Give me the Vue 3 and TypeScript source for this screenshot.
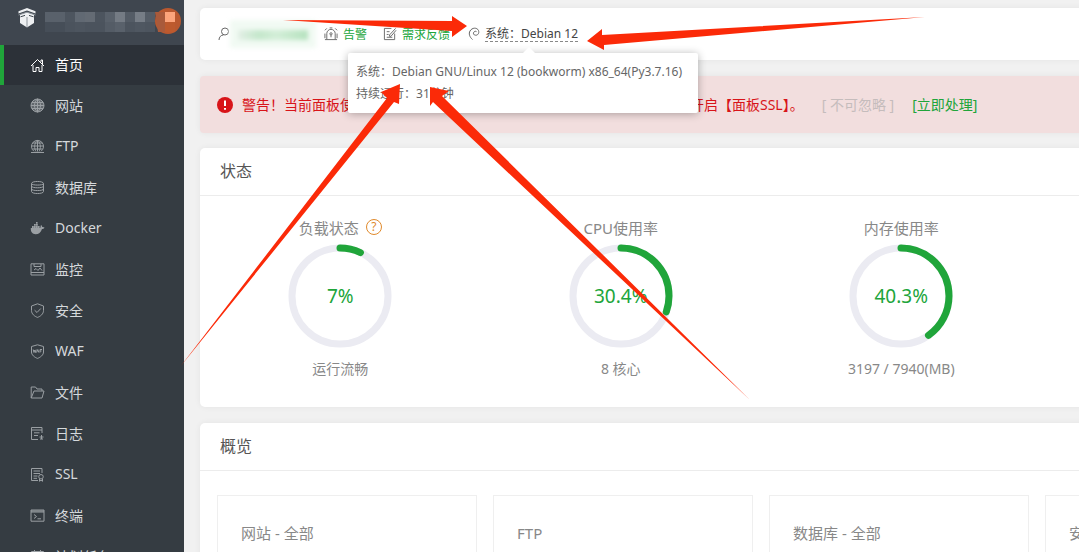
<script setup lang="ts">
interface NavItem {
  label: string
  strokes?: string
  fills?: string
}

interface Gauge {
  title: string
  percent: number
  value: string
  note: string
  help?: boolean
}

const navItems: NavItem[] = [
  { label: '首页', strokes: 'M1 8L7.5 1.5L14 8M3 7V13.5H6V9.5H9V13.5H12V7M11 4V2H12.5V6' },
  {
    label: '网站',
    fills: 'M7.5 1A6.5 6.5 0 1 0 7.5 14A6.5 6.5 0 1 0 7.5 1Z',
    strokes: 'M7.5 1V14M1 7.5H14M2 4.5H13M2 10.5H13M7.5 1C3.5 4 3.5 11 7.5 14M7.5 1C11.5 4 11.5 11 7.5 14M7.5 1A6.5 6.5 0 1 0 7.5 14A6.5 6.5 0 1 0 7.5 1Z',
  },
  {
    label: 'FTP',
    strokes:
      'M4 12.3A6 6 0 1 1 11 12.3M7.5 1.2V12.5M1.5 7H13.5M2.5 4H12.5M2.5 10H12.5M7.5 1.2C4 4 4 9.5 6 12.5M7.5 1.2C11 4 11 9.5 9 12.5M1 13.5H14',
  },
  {
    label: '数据库',
    strokes:
      'M1.5 3.5C1.5 .8 13.5 .8 13.5 3.5C13.5 5.6 1.5 5.6 1.5 3.5V11.5C1.5 14.2 13.5 14.2 13.5 11.5V3.5M1.5 6.2C1.5 8.3 13.5 8.3 13.5 6.2M1.5 9C1.5 11.1 13.5 11.1 13.5 9',
  },
  {
    label: 'Docker',
    fills:
      'M.8 7H10.2C10.8 6.2 10.5 5 11 4C12 4.6 12.2 5.4 12.2 6C13 5.8 14 6 14.5 6.5C14 7.6 13 8 12 8C11 11.5 8.6 13.2 5.6 13.2C2.4 13.2 .6 11 .8 7ZM2 5H3.8V7H2ZM4 5H5.8V7H4ZM6 5H7.8V7H6ZM8 5H9.6V7H8ZM4 3H5.8V4.8H4ZM6 3H7.8V4.8H6ZM6 1H7.6V2.8H6Z',
  },
  { label: '监控', strokes: 'M1 1.8H14V13H1ZM1 10.5H14M4 2V4.5H11V2M4 8L6 6.5L8 8.5L10 6L12 8.5' },
  { label: '安全', strokes: 'M7.5 .8L13.5 3V7.5C13.5 11 10.5 13.3 7.5 14.4C4.5 13.3 1.5 11 1.5 7.5V3ZM4.6 7.2L7 9.5L10.8 5.5' },
  {
    label: 'WAF',
    strokes:
      'M7.5 .8L13.5 2.5V8C13.5 11 10.5 13.3 7.5 14.4C4.5 13.3 1.5 11 1.5 8V2.5ZM3.2 5.5L4 8.5L4.8 6L5.6 8.5L6.2 5.5M6.6 8.5L7.8 5.5L8.8 8.5M10 8.5V5.5H12M10 7H11.5',
  },
  { label: '文件', strokes: 'M1.2 13V2H5.5L7 4H12V6M1.2 13H12L14 6H4L1.2 13' },
  { label: '日志', strokes: 'M12 7V1.5H1.5V13.5H8M1.5 4H12M4 6.8H9.5M4 9.5H8M11.5 9V13M9.5 11H13.5M10 13H13' },
  { label: 'SSL', strokes: 'M12 6V1.5H1.5V13.5H8M3.5 4H10M3.5 6.5H10M3.5 9H7.5M3.5 11.3H7M11 7.5A2.2 2.2 0 1 0 11 12A2.2 2.2 0 1 0 11 7.5M9.5 12V14.3L11 13.2L12.5 14.3V12' },
  { label: '终端', strokes: 'M1 2H14V13.2H1ZM1 3H14M1 4H14M4 6.5L6.5 8.5L4 10.5M7.5 10.8H11' },
  { label: '计划任务', strokes: 'M1.5 2.5H13.5V13.5H1.5ZM1.5 5.5H13.5M4.5 1V4M10.5 1V4' },
]

const gauges: Gauge[] = [
  { title: '负载状态', percent: 7, value: '7%', note: '运行流畅', help: true },
  { title: 'CPU使用率', percent: 30.4, value: '30.4%', note: '8 核心' },
  { title: '内存使用率', percent: 40.3, value: '40.3%', note: '3197 / 7940(MB)' },
]

const cards: string[] = ['网站 - 全部', 'FTP', '数据库 - 全部', '安全风险']

const headTiles: string[] = [
  '#59616b', '#59616b', '#4d555f', '#616973', '#646b74', '#4c545e', '#59616b', '#747b84', '#545c66', '#767d86', '#555d67',
  '#464e58', '#464e58', '#4b535d', '#4d555f', '#4b535d', '#4b535d', '#545c66', '#59616b', '#4c545e', '#4f5761', '#4d555f',
]
</script>

<template>
  <div class="app">
    <aside class="sidebar">
      <div class="brand">
        <svg class="logo" viewBox="0 0 18 20" aria-hidden="true">
          <path d="M9 0L17.5 3.2V5.4L9 2.4L.5 5.4V3.2Z" fill="#eef0f2" />
          <path d="M2 6.4L9 4.2L16 6.4V15L9 19.5L2 15Z" fill="#eef0f2" />
          <path d="M.5 7L9 4.2L17.5 7M9 9V19" fill="none" stroke="#8d949b" />
          <path d="M2.5 8.8L7 7.4M15.5 8.8L11 7.4" stroke="#3f474f" />
        </svg>
        <div class="tiles">
          <i v-for="(c, i) in headTiles" :key="i" :style="{ background: c }"></i>
        </div>
        <svg class="badge" viewBox="0 0 28 28" aria-hidden="true">
          <circle cx="14" cy="13" r="13" fill="#b9582f" />
          <path d="M1 4H11V24H4Z" fill="#a95a3b" />
          <path d="M11 4H21V14H11Z" fill="#fca47b" />
          <path d="M11 14H21V24H11Z" fill="#bd5a2e" />
        </svg>
      </div>
      <nav>
        <a v-for="(item, i) in navItems" :key="item.label" href="#" class="nav-item" :class="{ active: i === 0 }">
          <svg class="nav-icon" viewBox="0 0 15 15" aria-hidden="true">
            <path v-if="item.fills" :d="item.fills" class="fill" :class="{ dim: item.strokes }" />
            <path v-if="item.strokes" :d="item.strokes" class="line" />
          </svg>
          <span>{{ item.label }}</span>
        </a>
      </nav>
    </aside>

    <main class="content">
      <header class="panel topbar">
        <svg class="user-icon" viewBox="0 0 12 14" aria-hidden="true">
          <circle cx="7" cy="4.5" r="3.5" />
          <path d="M1 13C1 10 3 8 5.5 8" />
        </svg>
        <div class="masked"><i></i></div>
        <a href="#" class="tool alarm">
          <svg viewBox="0 0 15 15" aria-hidden="true">
            <path d="M1 13.5H14M3 13V7A4.5 4.5 0 0 1 12 7V13M7.5 8.5V11M6.3 7.3A1.2 1.2 0 1 1 8.7 7.3A1.2 1.2 0 1 1 6.3 7.3M1 3.5L3 1.5M14 3.5L12 1.5M1 7V12M14 7V12M6 1H9" />
          </svg>
          <span>告警</span>
        </a>
        <a href="#" class="tool feedback">
          <svg viewBox="0 0 15 15" aria-hidden="true">
            <path d="M9 1.5H1.5V13.5H12.5V7M4 5H7M4 8H6M4 11H10M7 8.5L13.5 1.5M7 8.5V10H8.5L14 3.5" />
          </svg>
          <span>需求反馈</span>
        </a>
        <div class="system">
          <svg viewBox="0 0 12 14" aria-hidden="true">
            <path d="M4.5 12.5C1.5 10 .5 6.5 2 4C4 .5 9 .2 10.5 3.5C11.5 6.5 9.5 8.5 7.5 8.2C5.5 8 5 6.5 5.8 5.2C6.4 4.2 7.7 4 8.5 4.6" />
          </svg>
          <span class="system-name">系统：Debian 12</span>
          <div class="tooltip" role="tooltip">
            <div>系统：Debian GNU/Linux 12 (bookworm) x86_64(Py3.7.16)</div>
            <div>持续运行：31分钟</div>
          </div>
        </div>
      </header>

      <section class="alert" role="alert">
        <svg viewBox="0 0 16 16" aria-hidden="true">
          <circle cx="8" cy="8" r="8" fill="#d81419" />
          <path d="M8 3.5V9M8 11V12.8" stroke="#fff" stroke-width="2" />
        </svg>
        <span>警告！当前面板使用的是 HTTP 协议，传输的数据可能会被窃取，请立即开启【面板SSL】。</span>
        <span class="ignore">[ 不可忽略 ]</span>
        <a href="#">[立即处理]</a>
      </section>

      <section class="panel">
        <h2>状态</h2>
        <div class="gauges">
          <div v-for="g in gauges" :key="g.title" class="gauge">
            <div class="gauge-title">
              <span>{{ g.title }}</span>
              <button v-if="g.help" type="button" aria-label="负载说明">?</button>
            </div>
            <div class="ring">
              <svg viewBox="0 0 104 104" aria-hidden="true">
                <circle cx="52" cy="52" r="48" class="track" />
                <circle
                  cx="52"
                  cy="52"
                  r="48"
                  class="arc"
                  pathLength="100"
                  :stroke-dasharray="`${g.percent} 100`"
                  transform="rotate(-90 52 52)"
                />
              </svg>
              <strong>{{ g.value }}</strong>
            </div>
            <div class="gauge-note">{{ g.note }}</div>
          </div>
        </div>
      </section>

      <section class="panel">
        <h2>概览</h2>
        <div class="cards">
          <div v-for="c in cards" :key="c" class="card">{{ c }}</div>
        </div>
      </section>
    </main>

    <svg class="arrows" width="1079" height="552" viewBox="0 0 1079 552" aria-hidden="true">
      <path d="M283 20L452 31V37L467 26L452 16V21Z" />
      <path d="M925 17L602 35V29L587 41L604 50V45Z" />
      <path d="M180 367L387 98L381 92L400 84L399 104L394 102Z" />
      <path d="M750 400L433 102L430 106L430 87L449 91L442 96Z" />
    </svg>
  </div>
</template>

<style>
body {
  background: #f1f1f1;
}
html,
body {
  height: 100%;
  overflow: hidden;
}
#app {
  height: 100%;
}
</style>

<style scoped>
.app {
  position: relative;
  display: flex;
  height: 100%;
  overflow: hidden;
  font-family: 'Noto Sans', 'Noto Sans CJK SC', sans-serif;
  font-size: 12px;
  color: #555;
}
a {
  text-decoration: none;
}
.sidebar {
  flex: 0 0 184px;
  background: #353c42;
  overflow: hidden;
}
.brand {
  display: flex;
  align-items: flex-start;
  height: 45px;
  padding: 8px 0 0 18px;
  box-sizing: border-box;
  background: #3f464f;
}
.logo {
  width: 18px;
  height: 20px;
}
.tiles {
  display: grid;
  grid-template-columns: repeat(11, 10px);
  grid-auto-rows: 10px;
  margin: 4px 0 0 9px;
}
.badge {
  width: 28px;
  height: 28px;
  margin-left: -1px;
}
.nav-item {
  display: flex;
  align-items: center;
  height: 41px;
  padding-left: 30px;
  gap: 10px;
  box-sizing: border-box;
  font-size: 14px;
  color: #d5d9dc;
}
.nav-item span {
  padding-bottom: 2px;
}
.nav-item.active {
  height: 40px;
  padding-left: 26px;
  border-left: 4px solid #20a53a;
  background: #2c3138;
  color: #fff;
}
.nav-icon {
  width: 15px;
  height: 15px;
}
.line {
  fill: none;
  stroke: #9a9fa3;
}
.fill {
  fill: #9a9fa3;
}
.fill.dim {
  fill: #62686d;
}
.active .line {
  stroke: #fff;
}
.content {
  flex: 1 0 auto;
  min-width: 1138px;
  box-sizing: border-box;
  padding: 8px 0 0 16px;
}
.panel {
  margin-bottom: 16px;
  border-radius: 5px;
  background: #fff;
  box-shadow: 0 0 6px rgba(0, 0, 0, 0.06);
}
.topbar {
  display: flex;
  align-items: center;
  height: 52px;
  padding-left: 18px;
}
.topbar svg {
  fill: none;
  stroke: #666;
}
.user-icon {
  width: 12px;
  height: 14px;
}
.masked {
  width: 86px;
  height: 28px;
  box-sizing: border-box;
  padding: 10px 8px 8px;
  background: #f1faf3;
  filter: blur(2px);
}
.masked i {
  display: block;
  height: 10px;
  background: linear-gradient(90deg, #e3efe6, #c4e7cb 30%, #d3eed8 55%, #b5e2be);
}
.tool,
.system {
  display: flex;
  align-items: center;
  gap: 5px;
  color: #20a53a;
}
.tool svg {
  width: 14px;
  height: 14px;
}
.alarm {
  margin-left: 8px;
}
.feedback {
  margin-left: 16px;
}
.system {
  position: relative;
  margin-left: 18px;
  color: #444;
}
.system > svg {
  width: 12px;
  height: 14px;
}
.system-name {
  line-height: 14px;
  white-space: nowrap;
  border-bottom: 1px dashed #888;
}
.tooltip {
  position: absolute;
  top: 26px;
  left: -120px;
  z-index: 2;
  min-width: 350px;
  padding: 8px;
  box-sizing: border-box;
  border-radius: 2px;
  background: #fff;
  box-shadow: 0 1px 8px rgba(0, 0, 0, 0.3);
  line-height: 22px;
  white-space: nowrap;
  color: #666;
}
.tooltip::before {
  content: '';
  position: absolute;
  top: -6px;
  left: 50%;
  border: 6px solid transparent;
  border-top: 0;
  border-bottom-color: #fff;
}
.alert {
  display: flex;
  align-items: center;
  height: 57px;
  margin-bottom: 15px;
  padding-left: 17px;
  border-radius: 4px;
  background: #f2dede;
  box-shadow: 0 0 6px rgba(0, 0, 0, 0.06);
  font-size: 14px;
  color: #d81419;
  white-space: nowrap;
}
.alert svg {
  width: 16px;
  height: 16px;
  margin-right: 9px;
}
.alert span {
  padding-bottom: 2px;
}
.alert a {
  margin-left: 18px;
  padding-bottom: 2px;
  color: #20a53a;
}
.alert .ignore {
  margin-left: 18px;
  color: #c5bcbc;
}
h2 {
  margin: 0;
  height: 47px;
  padding-left: 20px;
  border-bottom: 1px solid #ececec;
  font-size: 16px;
  font-weight: 400;
  line-height: 47px;
  color: #555;
}
.gauges {
  display: grid;
  grid-template-columns: repeat(4, 1fr);
  padding: 19px 0 27px;
}
.gauge {
  display: flex;
  flex-direction: column;
  align-items: center;
  color: #888;
}
.gauge-title {
  display: flex;
  align-items: center;
  gap: 7px;
  height: 24px;
  font-size: 15px;
}
.gauge-title button {
  width: 16px;
  height: 16px;
  padding: 0;
  border: 1px solid #e08a2c;
  border-radius: 50%;
  background: none;
  font: 12px/14px 'Noto Sans', sans-serif;
  color: #e08a2c;
}
.ring {
  display: grid;
  place-items: center;
  width: 104px;
  height: 104px;
  margin-top: 5px;
}
.ring > * {
  grid-area: 1 / 1;
}
.ring svg {
  width: 104px;
  height: 104px;
}
.track,
.arc {
  fill: none;
  stroke: #ebebf2;
  stroke-width: 7;
}
.arc {
  stroke: #20a53a;
  stroke-linecap: round;
}
.ring strong {
  font-size: 19px;
  font-weight: 400;
  color: #20a53a;
}
.gauge-note {
  margin-top: 10px;
  font-size: 14px;
  line-height: 22px;
}
.cards {
  display: grid;
  grid-template-columns: repeat(4, 1fr);
  gap: 16px;
  padding: 24px 17px;
}
.card {
  height: 120px;
  padding: 25px 23px;
  box-sizing: border-box;
  border: 1px solid #efefef;
  font-size: 15px;
  line-height: 24px;
  color: #888;
}
.arrows {
  position: absolute;
  top: 0;
  left: 0;
  z-index: 3;
  pointer-events: none;
  fill: #fb2a08;
}
</style>
